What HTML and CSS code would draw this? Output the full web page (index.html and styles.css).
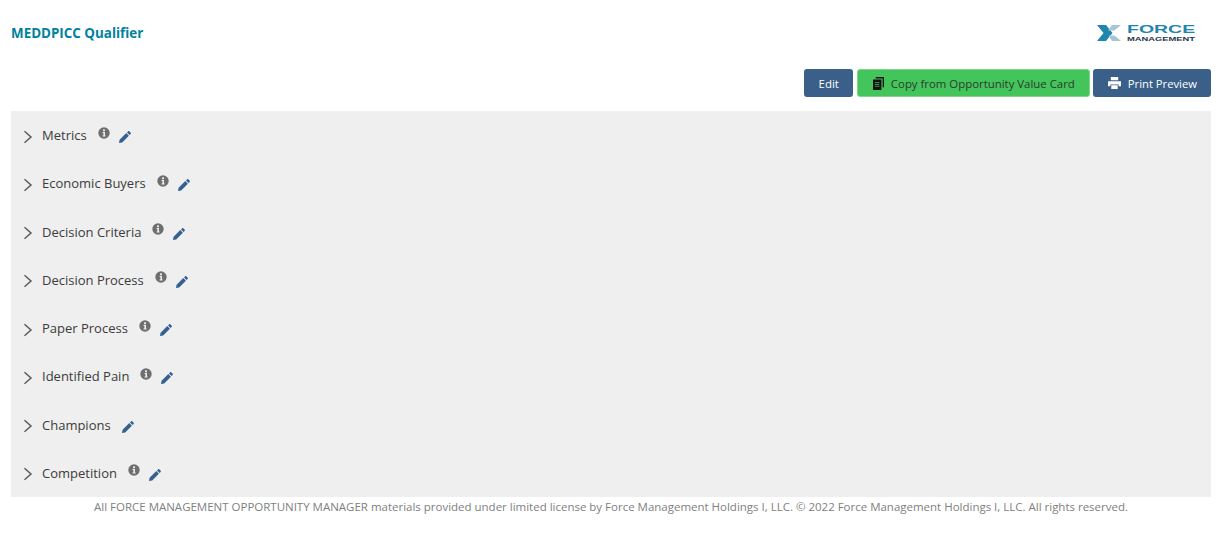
FILE: index.html
```html
<!DOCTYPE html>
<html lang="en">
<head>
    <meta charset="UTF-8">
    <meta name="viewport" content="width=device-width, initial-scale=1.0">
    <title>MEDDPICC Qualifier</title>
    <link rel="stylesheet" href="styles.css">
</head>
<body>
    <svg class="icon-defs" width="0" height="0">
        <symbol id="chevron" viewBox="0 0 10 14"><path d="M1.5 1.2 8 7l-6.500 5.800" fill="none" stroke="currentColor" stroke-width="1.500"/></symbol>
        <symbol id="info" viewBox="0 0 12 12"><circle cx="6" cy="6" r="5.700" fill="#6e6e6e"/><rect x="5" y="2.400" width="2" height="1.800" fill="#eee"/><path d="M4.600 5.100H7V8.500h.6v1H4.500v-1h.9V6.100h-.8z" fill="#eee"/></symbol>
        <symbol id="pencil" viewBox="0 0 12 12"><path d="M0 12l.6-3.200L7.300 2.100l2.600 2.600L3.200 11.400zM8 1.400 9 .4c.4-.4 1-.4 1.400 0l1.200 1.200c.4.4.4 1 0 1.400l-1 1z" fill="#35608f"/></symbol>
    </svg>

    <!-- Header -->
    <header class="page-header">
        <h1 class="page-title">MEDDPICC Qualifier</h1>
        <div class="logo">
            <svg class="logo-mark" viewBox="0 0 24 16" width="24" height="16">
                <path d="M0 0h9l6.500 8L9 16H0l6.500-8z" fill="#1f86ad"/>
                <path d="M15 0h9l-6.500 5.500h-6.500z M11.500 10.500h6l6.500 5.500H15z" fill="#a9c4d2"/>
            </svg>
            <div class="logo-text">
                <span class="logo-force">FORCE</span>
                <span class="logo-management">MANAGEMENT</span>
            </div>
        </div>
    </header>

    <!-- Action buttons -->
    <div class="toolbar">
        <button type="button" class="btn">Edit</button>
        <button type="button" class="btn btn-green">
            <svg viewBox="0 0 12 14" width="11" height="13"><path d="M3 0h9v11h-1.500V1.500H3zM0 2.500h9.200V14H0z" fill="#111"/><path d="M2 6h5M2 8h5M2 10h5" stroke="#45c55c" stroke-width=".8"/></svg>
            Copy from Opportunity Value Card
        </button>
        <button type="button" class="btn btn-print">
            <svg viewBox="0 0 14 13" width="13" height="12"><path d="M3 0h8v3.500H3zM0 4.500h14V10h-2.500V8h-9v2H0zM3.500 9h7v4h-7z" fill="#fff"/></svg>
            Print Preview
        </button>
    </div>

    <!-- Sections -->
    <div class="sections">
        <div class="section-row">
            <svg class="chevron"><use href="#chevron"/></svg><span class="section-name">Metrics</span>
            <svg class="info"><use href="#info"/></svg><svg class="pencil"><use href="#pencil"/></svg>
        </div>
        <div class="section-row">
            <svg class="chevron"><use href="#chevron"/></svg><span class="section-name">Economic Buyers</span>
            <svg class="info"><use href="#info"/></svg><svg class="pencil"><use href="#pencil"/></svg>
        </div>
        <div class="section-row">
            <svg class="chevron"><use href="#chevron"/></svg><span class="section-name">Decision Criteria</span>
            <svg class="info"><use href="#info"/></svg><svg class="pencil"><use href="#pencil"/></svg>
        </div>
        <div class="section-row">
            <svg class="chevron"><use href="#chevron"/></svg><span class="section-name">Decision Process</span>
            <svg class="info"><use href="#info"/></svg><svg class="pencil"><use href="#pencil"/></svg>
        </div>
        <div class="section-row">
            <svg class="chevron"><use href="#chevron"/></svg><span class="section-name">Paper Process</span>
            <svg class="info"><use href="#info"/></svg><svg class="pencil"><use href="#pencil"/></svg>
        </div>
        <div class="section-row">
            <svg class="chevron"><use href="#chevron"/></svg><span class="section-name">Identified Pain</span>
            <svg class="info"><use href="#info"/></svg><svg class="pencil"><use href="#pencil"/></svg>
        </div>
        <div class="section-row">
            <svg class="chevron"><use href="#chevron"/></svg><span class="section-name">Champions</span>
            <svg class="pencil pencil-solo"><use href="#pencil"/></svg>
        </div>
        <div class="section-row">
            <svg class="chevron"><use href="#chevron"/></svg><span class="section-name">Competition</span>
            <svg class="info"><use href="#info"/></svg><svg class="pencil"><use href="#pencil"/></svg>
        </div>
    </div>

    <footer class="page-footer">All FORCE MANAGEMENT OPPORTUNITY MANAGER materials provided under limited license by Force Management Holdings I, LLC. © 2022 Force Management Holdings I, LLC. All rights reserved.</footer>
</body>
</html>
```

FILE: styles.css
```css
/* General reset */
* {
    margin: 0;
    padding: 0;
    box-sizing: border-box;
}

body {
    font-family: "Open Sans", "Noto Sans", Arial, sans-serif;
    background-color: #fff;
    color: #3b3b3b;
    padding: 0 13px 0 11px;
}

.icon-defs {
    display: block;
}

/* Header */
.page-header {
    height: 69px;
    display: flex;
    justify-content: space-between;
    align-items: flex-start;
}

.page-title {
    font-size: 13.4px;
    font-weight: 700;
    color: #00829f;
    margin-top: 24px;
    line-height: 18px;
}

.logo {
    display: flex;
    gap: 6px;
    margin-top: 25px;
    margin-right: 14px;
    width: 100px;
}

.logo-text {
    width: 70px;
    display: flex;
    flex-direction: column;
    gap: 3px;
}

.logo-force,
.logo-management {
    display: block;
    width: max-content;
    transform-origin: left top;
    font-family: "Liberation Sans", Arial, sans-serif;
    font-weight: 700;
}

.logo-force {
    font-size: 11px;
    line-height: 9px;
    transform: scaleX(1.77);
    color: #1f86ad;
}

.logo-management {
    font-size: 5.5px;
    line-height: 5px;
    transform: scaleX(1.7);
    color: #1f3550;
}

/* Toolbar */
.toolbar {
    display: flex;
    justify-content: flex-end;
    gap: 4px;
    height: 42px;
}

.btn {
    height: 28px;
    padding: 0 14px 0 15px;
    display: flex;
    align-items: center;
    gap: 7px;
    font-family: inherit;
    font-size: 11.45px;
    font-weight: 500;
    color: #fff;
    background-color: #3a5f88;
    border: none;
    border-radius: 3px;
}

.btn-green {
    background-color: #43c55c;
    border: 1px solid #7ed68d;
    color: #2c3a2c;
    font-size: 11.4px;
    font-weight: 400;
}

.btn-print {
    margin-left: -1px;
    font-size: 11.25px;
}

/* Sections panel */
.sections {
    background-color: #efefef;
    height: 386px;
    padding-left: 12px;
}

.section-row {
    height: 48.25px;
    display: flex;
    align-items: center;
    font-size: 13px;
}

.chevron {
    width: 10px;
    height: 14px;
    margin: 3px 9px 0 0;
    color: #5a5a5a;
}

.info {
    width: 12px;
    height: 12px;
    margin: 0 0 5px 11px;
}

.pencil {
    width: 12px;
    height: 12px;
    margin: 4px 0 0 9px;
}

.pencil-solo {
    margin-left: 11px;
}

/* Footer */
.page-footer {
    text-align: center;
    font-size: 11.49px;
    line-height: 20px;
    color: #808080;
}
```
